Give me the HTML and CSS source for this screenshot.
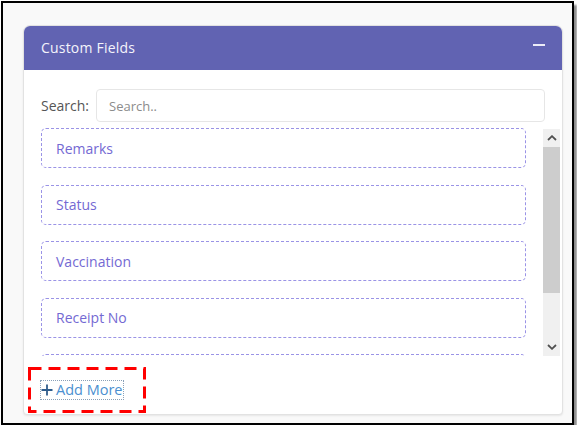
FILE: index.html
```html
<!DOCTYPE html>
<html>
<head>
<meta charset="utf-8">
<link rel="stylesheet" href="styles.css">
</head>
<body>
<div class="frame">
  <div class="card">
    <div class="card-header">
      <span class="card-title">Custom Fields</span>
      <span class="collapse-btn"></span>
    </div>
    <div class="card-body">
      <div class="search-row">
        <label class="search-label">Search:</label>
        <input class="search-input" type="text" placeholder="Search..">
      </div>
      <div class="list-wrap">
        <ul class="field-list">
          <li class="field-item">Remarks</li>
          <li class="field-item">Status</li>
          <li class="field-item">Vaccination</li>
          <li class="field-item">Receipt No</li>
          <li class="field-item">Batch No</li>
        </ul>
        <div class="scrollbar">
          <div class="sb-btn">
            <svg width="10" height="6" viewBox="0 0 10 6"><path d="M1 5 L5 1.2 L9 5" fill="none" stroke="#505050" stroke-width="1.8"/></svg>
          </div>
          <div class="sb-thumb"></div>
          <div class="sb-track"></div>
          <div class="sb-btn">
            <svg width="10" height="6" viewBox="0 0 10 6"><path d="M1 1 L5 4.8 L9 1" fill="none" stroke="#505050" stroke-width="1.8"/></svg>
          </div>
        </div>
      </div>
      <div class="add-row">
        <a class="add-more"><svg class="plus" width="12" height="12" viewBox="0 0 12 12"><path d="M6 0.5 V11.5 M0.5 6 H11.5" stroke="#2e5c8c" stroke-width="1.8" fill="none"/></svg>Add More</a>
        <svg class="highlight" width="118" height="46" viewBox="0 0 118 46"><rect x="1.5" y="1.5" width="115" height="43" fill="none" stroke="#ff0000" stroke-width="3" stroke-dasharray="12 7"/></svg>
      </div>
    </div>
  </div>
</div>
</body>
</html>
```
FILE: styles.css
```css
html, body {
  margin: 0;
  padding: 0;
  background: #ffffff;
}
body {
  font-family: "Open Sans", "Noto Sans", sans-serif;
}
.frame {
  box-sizing: border-box;
  width: 573px;
  height: 424px;
  margin: 1px 0 0 1px;
  border: 2px solid #000;
  background: #f9f9f9;
  box-shadow: 3px 4px 2px rgba(0, 0, 0, 0.45);
  padding: 22px 0 0 20px;
}
.card {
  box-sizing: border-box;
  width: 540px;
  height: 390px;
  border: 1px solid #e2e2e2;
  border-radius: 7px 7px 4px 4px;
  background: #fff;
  box-shadow: 0 1px 2px rgba(0, 0, 0, 0.08);
  overflow: hidden;
  display: flex;
  flex-direction: column;
}
.card-header {
  height: 44px;
  background: #6163b2;
  display: flex;
  align-items: center;
  justify-content: space-between;
  padding: 0 17px 0 17px;
  flex-shrink: 0;
}
.card-title {
  color: #f4f4fb;
  font-size: 14px;
  letter-spacing: 0.2px;
  margin-top: -2px;
}
.collapse-btn {
  width: 12px;
  height: 2px;
  background: #ececf7;
  margin-top: -6px;
}
.card-body {
  padding: 19px 0 0 17px;
  flex: 1;
}
.search-row {
  display: flex;
  align-items: center;
  margin-right: 17px;
  gap: 7px;
}
.search-label {
  color: #555;
  font-size: 14px;
}
.search-input {
  flex: 1;
  box-sizing: border-box;
  height: 33px;
  border: 1px solid #e6e6e6;
  border-radius: 4px;
  padding: 0 12px;
  font-family: "Open Sans", "Noto Sans", sans-serif;
  font-size: 13px;
  color: #555;
  outline: none;
}
.search-input::placeholder {
  color: #8c8c8c;
}
.list-wrap {
  display: flex;
  margin-top: 6px;
  height: 228px;
  gap: 17px;
  margin-right: 2px;
}
.field-list {
  list-style: none;
  margin: 0;
  padding: 0;
  flex: 1;
  overflow: hidden;
}
.field-item {
  box-sizing: border-box;
  height: 40px;
  margin-bottom: 16.5px;
  border: 1px dashed #9a93e6;
  border-radius: 5px;
  display: flex;
  align-items: center;
  padding-left: 14px;
  color: #7469d3;
  font-size: 14px;
}
.scrollbar {
  width: 17px;
  height: 227px;
  margin-top: 1px;
  background: #f0f0f0;
  display: flex;
  flex-direction: column;
}
.sb-btn {
  height: 18px;
  display: flex;
  align-items: center;
  justify-content: center;
}
.sb-thumb {
  height: 146px;
  background: #cdcdcd;
}
.sb-track {
  flex: 1;
}
.add-row {
  position: relative;
  margin-top: 23px;
  height: 20px;
}
.add-more {
  display: inline-flex;
  align-items: center;
  outline: 1px dotted #8aa0b8;
  color: #4b8fd0;
  font-size: 14.5px;
  line-height: 18px;
  cursor: pointer;
}
.plus {
  margin-right: 3px;
}
.highlight {
  position: absolute;
  left: -13px;
  top: -12px;
}
```
